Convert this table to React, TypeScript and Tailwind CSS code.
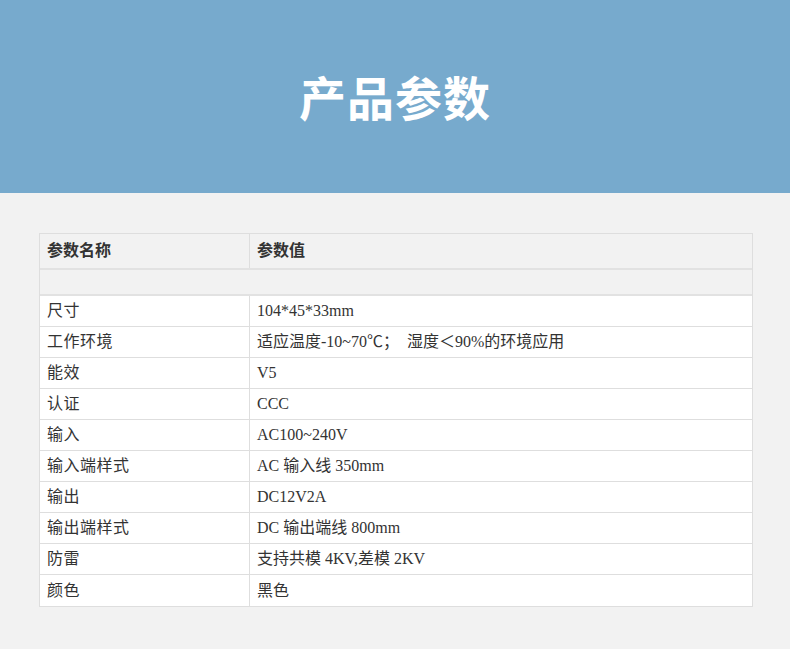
import React from "react";

const rows = [
  { name: "尺寸", value: "104*45*33mm" },
  { name: "工作环境", value: "适应温度-10~70℃；　湿度＜90%的环境应用" },
  { name: "能效", value: "V5" },
  { name: "认证", value: "CCC" },
  { name: "输入", value: "AC100~240V" },
  { name: "输入端样式", value: "AC 输入线 350mm" },
  { name: "输出", value: "DC12V2A" },
  { name: "输出端样式", value: "DC 输出端线 800mm" },
  { name: "防雷", value: "支持共模 4KV,差模 2KV" },
  { name: "颜色", value: "黑色" },
];

export default function App() {
  return (
    <div className="w-[790px] h-[649px] bg-[#f2f2f2] overflow-hidden">
      {/* header banner */}
      <div className="h-[193px] bg-[#77aacd] flex items-center justify-center">
        <h1
          className="text-white text-[47px] font-semibold tracking-[1px]"
          style={{ fontFamily: '"Noto Sans CJK SC", sans-serif' }}
        >
          产品参数
        </h1>
      </div>

      {/* table */}
      <div
        className="mt-[40px] ml-[39px] w-[714px] border border-[#dedede] text-[#333] text-[16px]"
        style={{ fontFamily: '"Liberation Serif", "Noto Sans CJK SC", serif' }}
      >
        <div className="flex h-[36px] bg-[#f2f2f2] border-b-2 border-[#e2e2e2] font-bold">
          <div className="w-[210px] border-r border-[#dedede] flex items-center pl-[7px]">参数名称</div>
          <div className="flex-1 flex items-center pl-[7px]">参数值</div>
        </div>
        <div className="h-[26px] bg-[#f2f2f2] border-b-2 border-[#e2e2e2]" />
        {rows.map((r, i) => (
          <div
            key={r.name}
            className={`flex h-[31px] bg-white ${i < rows.length - 1 ? "border-b border-[#dedede]" : ""}`}
          >
            <div className="w-[210px] border-r border-[#dedede] flex items-center pl-[7px] tracking-[0.5px]">{r.name}</div>
            <div className="flex-1 flex items-center pl-[7px]">{r.value}</div>
          </div>
        ))}
      </div>
    </div>
  );
}
